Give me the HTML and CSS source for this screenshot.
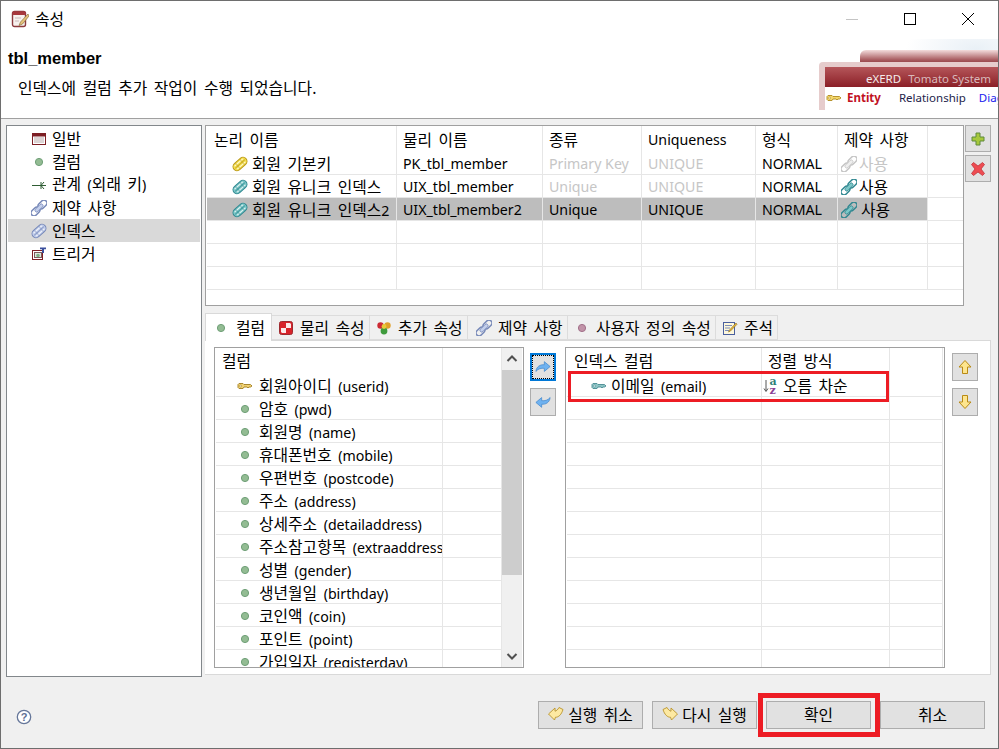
FILE: index.html
```html
<!DOCTYPE html>
<html lang="ko">
<head>
  <meta charset="UTF-8">
  <title>속성</title>
  <link rel="stylesheet" href="styles.css">
</head>
<body>
  <!-- icon sheet -->
  <svg class="sprites" width="0" height="0">
    <symbol id="i-pencil" viewBox="0 0 16 16">
      <g transform="rotate(-42 8 8)">
        <rect x="0" y="4" width="16" height="8" rx="4" fill="currentColor" stroke="var(--edge)"/>
        <path d="M2.5 6H13.5M2.5 10H13.5" stroke="#fff" stroke-opacity=".8" fill="none"/>
        <path d="M1.5 8H14.5" stroke="var(--edge)" stroke-opacity=".7" fill="none"/>
        <path d="M5 4.5V11.5M11 4.5V11.5" stroke="var(--edge)" stroke-opacity=".45" fill="none"/>
      </g>
    </symbol>
    <symbol id="i-link" viewBox="0 0 16 16">
      <g transform="rotate(-45 8 8)" fill="none">
        <rect x="-2" y="5" width="10" height="6" rx="3" stroke="var(--edge)" stroke-width="1.5"/>
        <rect x="8" y="5" width="10" height="6" rx="3" stroke="var(--edge)" stroke-width="1.5"/>
        <rect x="3" y="6.3" width="10" height="3.4" rx="1.7" fill="currentColor" stroke="var(--edge)" stroke-width=".8"/>
      </g>
    </symbol>
    <symbol id="i-dot" viewBox="0 0 16 16">
      <circle cx="8" cy="8" r="3.6" fill="#93bc93" stroke="#6f9f77"/>
    </symbol>
    <symbol id="i-dot-pink" viewBox="0 0 16 16">
      <circle cx="8" cy="8" r="3.6" fill="#c193a8" stroke="#a2708a"/>
    </symbol>
    <symbol id="i-key" viewBox="0 0 16 16">
      <path d="M2 5.5H6L7 6.5H13.5L15 8L13.5 9H12L11 10L10 9H7L6 10.5H2L1 9.5V6.5Z" fill="currentColor" stroke="var(--edge)" stroke-width=".9"/>
      <circle cx="3.6" cy="8" r="1" fill="#fff" stroke="var(--edge)" stroke-width=".6"/>
    </symbol>
    <symbol id="i-table" viewBox="0 0 16 16">
      <rect x="1.5" y="2.5" width="13" height="11" fill="#fff" stroke="#7d1f24"/>
      <rect x="1.5" y="2.5" width="13" height="2.5" fill="#7d1f24" stroke="#7d1f24"/>
      <path d="M3 7H13M3 9H13M3 11H13" stroke="#b9a9a9"/>
    </symbol>
    <symbol id="i-relation" viewBox="0 0 16 16">
      <path d="M1 8.5H15" stroke="#2f5d34" fill="none"/>
      <path d="M13 5L10 8.5L13 12M10 5V12" stroke="#2f5d34" fill="none"/>
    </symbol>
    <symbol id="i-trigger" viewBox="0 0 16 16">
      <rect x="1.5" y="4.5" width="10" height="9" fill="#fff" stroke="#7d1f24"/>
      <rect x="3.5" y="6.5" width="7" height="5" fill="#dfe8df" stroke="#7d5a5a"/>
      <circle cx="7" cy="9.5" r="1.8" fill="#7fae85"/>
      <path d="M9 1.5H15V3.2H13V7H11V3.2H9Z" fill="#3b4f9c"/>
    </symbol>
    <symbol id="i-check" viewBox="0 0 16 16">
      <rect x="1.5" y="1.5" width="13" height="13" rx="2" fill="#d8232a" stroke="#9d2b30"/>
      <path d="M3 8H8V13H4L3 12ZM8 3H12L13 4V8H8Z" fill="#fbeaea"/>
    </symbol>
    <symbol id="i-hearts" viewBox="0 0 16 16">
      <circle cx="4.5" cy="5.5" r="3.2" fill="#cc2a34"/>
      <circle cx="11.5" cy="5.5" r="3.2" fill="#e0a02a"/>
      <circle cx="8" cy="11" r="3.4" fill="#3f9b3c"/>
      <circle cx="8" cy="6.5" r="2.4" fill="#e7c93a"/>
    </symbol>
    <symbol id="i-note" viewBox="0 0 16 16">
      <rect x="1.5" y="2.5" width="11" height="12" fill="#fdf7dc" stroke="#4a5f9e"/>
      <path d="M3 5.5H10M3 8H8M3 10.5H7" stroke="#7d8db9"/>
      <path d="M14 3L7.5 10L6.5 12L8.5 11L15 4.3Z" fill="#e9b93a" stroke="#8a6a15" stroke-width=".6"/>
    </symbol>
    <symbol id="i-title" viewBox="0 0 18 18">
      <rect x="1.5" y="1.5" width="13" height="15" rx="2" fill="#f7f1ee" stroke="#8c3a3e" stroke-width="1.4"/>
      <rect x="1.5" y="1.5" width="13" height="3.5" rx="1" fill="#a8383d"/>
      <path d="M4 8H10M4 11H8" stroke="#c9b8b8"/>
      <path d="M17 4L9.5 12L8 15.5L11.5 14L18 6Z" fill="#e6c27a" stroke="#8b7340" stroke-width=".7"/>
    </symbol>
    <symbol id="i-plus" viewBox="0 0 16 16">
      <path d="M6 2H10V6H14V10H10V14H6V10H2V6H6Z" fill="#a6c83c" stroke="#5f8a3a"/>
    </symbol>
    <symbol id="i-cross" viewBox="0 0 16 16">
      <path d="M3.5 1.5L8 5L12.5 1.5L14.5 3.5L11 8L14.5 12.5L12.5 14.5L8 11L3.5 14.5L1.5 12.5L5 8L1.5 3.5Z" fill="#ee4c52" stroke="#c0333a" stroke-width=".8"/>
    </symbol>
    <symbol id="i-turn" viewBox="0 0 18 16">
      <path d="M1 13C1.5 7.5 6 5 10.5 5.5V2L17 7.5L10.5 13V9.5C7 9 3.5 10 1 13Z" fill="currentColor" stroke="var(--edge)" stroke-width=".8"/>
    </symbol>
    <symbol id="i-up" viewBox="0 0 16 16">
      <path d="M8 1.5L14 8H10.5V14.5H5.5V8H2Z" fill="#fde58e" stroke="#b98a14"/>
    </symbol>
    <symbol id="i-redo" viewBox="0 0 16 16">
      <path d="M1 3.5L5 1.5C6 3.5 7.5 4.8 9 5.2V2L15.5 8L9.5 14L8.5 11.2C5.5 11.5 2.5 8.5 1 3.5Z" fill="#fde9a2" stroke="#b9932a" stroke-width=".9"/>
    </symbol>
    <symbol id="i-chev" viewBox="0 0 16 16">
      <path d="M3.5 10L8 5.5L12.5 10" fill="none" stroke="#505050" stroke-width="2"/>
    </symbol>
  </svg>

  <div class="window">
    <div class="titlebar">
      <svg class="title-icon"><use href="#i-title"/></svg>
      <span class="title-text">속성</span>
      <div class="caption-buttons">
        <span class="caption"><svg width="12" height="12"><path d="M0 6.5H12" stroke="#c4c4c4"/></svg></span>
        <span class="caption"><svg width="12" height="12"><rect x=".5" y=".5" width="11" height="11" fill="none" stroke="#000"/></svg></span>
        <span class="caption"><svg width="12" height="12"><path d="M0 0L12 12M12 0L0 12" stroke="#000"/></svg></span>
      </div>
    </div>

    <div class="header">
      <h1>tbl_member</h1>
      <p>인덱스에 컬럼 추가 작업이 수행 되었습니다.</p>
      <div class="banner">
        <div class="banner-back"></div>
        <div class="banner-front">
          <div class="banner-title"><span>eXERD</span><span class="dim">Tomato System</span></div>
          <div class="banner-menu">
            <svg class="ic yellow-key"><use href="#i-key"/></svg>
            <b>Entity</b><span class="rel">Relationship</span><span class="diag">Diag</span>
          </div>
        </div>
      </div>
    </div>

    <div class="main">
      <ul class="nav">
        <li><svg class="ic"><use href="#i-table"/></svg><span>일반</span></li>
        <li><svg class="ic"><use href="#i-dot"/></svg><span>컬럼</span></li>
        <li><svg class="ic"><use href="#i-relation"/></svg><span>관계 <span class="en">(</span>외래 키<span class="en">)</span></span></li>
        <li><svg class="ic lavender"><use href="#i-link"/></svg><span>제약 사항</span></li>
        <li class="selected"><svg class="ic lavender"><use href="#i-pencil"/></svg><span>인덱스</span></li>
        <li><svg class="ic"><use href="#i-trigger"/></svg><span>트리거</span></li>
      </ul>

      <div class="content">
        <div class="top-row">
          <div class="grid-box index-box">
            <table class="grid grid-index">
              <colgroup>
                <col class="c190"><col class="c146"><col class="c99"><col class="c114"><col class="c82"><col class="c90"><col class="c36">
              </colgroup>
              <thead>
                <tr><th class="first">논리 이름</th><th>물리 이름</th><th>종류</th><th class="en">Uniqueness</th><th>형식</th><th>제약 사항</th><th></th></tr>
              </thead>
              <tbody>
                <tr>
                  <td><span class="cell"><svg class="ic yellow"><use href="#i-pencil"/></svg><span>회원 기본키</span></span></td>
                  <td class="en">PK_tbl_member</td><td class="en off">Primary Key</td><td class="en off">UNIQUE</td><td class="en">NORMAL</td>
                  <td class="off"><span class="flag"><svg class="ic grey"><use href="#i-link"/></svg>사용</span></td><td></td>
                </tr>
                <tr>
                  <td><span class="cell"><svg class="ic teal"><use href="#i-pencil"/></svg><span>회원 유니크 인덱스</span></span></td>
                  <td class="en">UIX_tbl_member</td><td class="en off">Unique</td><td class="en off">UNIQUE</td><td class="en">NORMAL</td>
                  <td><span class="flag"><svg class="ic teal"><use href="#i-link"/></svg>사용</span></td><td></td>
                </tr>
                <tr class="picked">
                  <td><span class="cell"><svg class="ic teal"><use href="#i-pencil"/></svg><span>회원 유니크 인덱스<span class="en">2</span></span></span></td>
                  <td class="en">UIX_tbl_member2</td><td class="en">Unique</td><td class="en">UNIQUE</td><td class="en">NORMAL</td>
                  <td><span class="flag wide"><svg class="ic teal"><use href="#i-link"/></svg>사용</span></td><td class="blank"></td>
                </tr>
                <tr><td></td><td></td><td></td><td></td><td></td><td></td><td></td></tr>
                <tr><td></td><td></td><td></td><td></td><td></td><td></td><td></td></tr>
                <tr><td></td><td></td><td></td><td></td><td></td><td></td><td></td></tr>
              </tbody>
            </table>
          </div>
          <div class="side-buttons">
            <button class="tool"><svg class="ic"><use href="#i-plus"/></svg></button>
            <button class="tool"><svg class="ic"><use href="#i-cross"/></svg></button>
          </div>
        </div>

        <div class="tabs">
          <div class="tab active"><svg class="ic"><use href="#i-dot"/></svg>컬럼</div>
          <div class="tab w98"><svg class="ic"><use href="#i-check"/></svg>물리 속성</div>
          <div class="tab w98"><svg class="ic"><use href="#i-hearts"/></svg>추가 속성</div>
          <div class="tab w100"><svg class="ic lavender"><use href="#i-link"/></svg>제약 사항</div>
          <div class="tab w148"><svg class="ic"><use href="#i-dot-pink"/></svg>사용자 정의 속성</div>
          <div class="tab w62"><svg class="ic"><use href="#i-note"/></svg>주석</div>
        </div>

        <div class="tab-panel">
          <div class="grid-box columns-box">
            <div class="clip">
              <table class="grid grid-columns">
                <colgroup><col class="c227"><col class="c59"></colgroup>
                <thead><tr><th>컬럼</th><th></th></tr></thead>
                <tbody>
                  <tr><td><span class="cell"><svg class="ic gold"><use href="#i-key"/></svg><span>회원아이디 <span class="en">(userid)</span></span></span></td><td></td></tr>
                  <tr><td><span class="cell"><svg class="ic"><use href="#i-dot"/></svg><span>암호 <span class="en">(pwd)</span></span></span></td><td></td></tr>
                  <tr><td><span class="cell"><svg class="ic"><use href="#i-dot"/></svg><span>회원명 <span class="en">(name)</span></span></span></td><td></td></tr>
                  <tr><td><span class="cell"><svg class="ic"><use href="#i-dot"/></svg><span>휴대폰번호 <span class="en">(mobile)</span></span></span></td><td></td></tr>
                  <tr><td><span class="cell"><svg class="ic"><use href="#i-dot"/></svg><span>우편번호 <span class="en">(postcode)</span></span></span></td><td></td></tr>
                  <tr><td><span class="cell"><svg class="ic"><use href="#i-dot"/></svg><span>주소 <span class="en">(address)</span></span></span></td><td></td></tr>
                  <tr><td><span class="cell"><svg class="ic"><use href="#i-dot"/></svg><span>상세주소 <span class="en">(detailaddress)</span></span></span></td><td></td></tr>
                  <tr><td><span class="cell"><svg class="ic"><use href="#i-dot"/></svg><span>주소참고항목 <span class="en">(extraaddress)</span></span></span></td><td></td></tr>
                  <tr><td><span class="cell"><svg class="ic"><use href="#i-dot"/></svg><span>성별 <span class="en">(gender)</span></span></span></td><td></td></tr>
                  <tr><td><span class="cell"><svg class="ic"><use href="#i-dot"/></svg><span>생년월일 <span class="en">(birthday)</span></span></span></td><td></td></tr>
                  <tr><td><span class="cell"><svg class="ic"><use href="#i-dot"/></svg><span>코인액 <span class="en">(coin)</span></span></span></td><td></td></tr>
                  <tr><td><span class="cell"><svg class="ic"><use href="#i-dot"/></svg><span>포인트 <span class="en">(point)</span></span></span></td><td></td></tr>
                  <tr><td><span class="cell"><svg class="ic"><use href="#i-dot"/></svg><span>가입일자 <span class="en">(registerday)</span></span></span></td><td></td></tr>
                </tbody>
              </table>
            </div>
            <div class="scrollbar">
              <span class="arrow"><svg class="ic"><use href="#i-chev"/></svg></span>
              <div class="track"><div class="thumb"></div></div>
              <span class="arrow down"><svg class="ic"><use href="#i-chev"/></svg></span>
            </div>
          </div>

          <div class="side-buttons move">
            <button class="tool focused"><svg class="ic blue"><use href="#i-turn"/></svg></button>
            <button class="tool"><svg class="ic blue turned"><use href="#i-turn"/></svg></button>
          </div>

          <div class="grid-box picked-box">
            <table class="grid grid-picked">
              <colgroup><col class="c195"><col class="c128"><col class="c53"></colgroup>
              <thead><tr><th class="first">인덱스 컬럼</th><th>정렬 방식</th><th></th></tr></thead>
              <tbody>
                <tr>
                  <td><span class="cell"><svg class="ic teal-key"><use href="#i-key"/></svg><span>이메일 <span class="en">(email)</span></span></span></td>
                  <td>
                    <span class="sort">
                      <svg class="ic" viewBox="0 0 16 16">
                        <path d="M3 2V13M1 10.5L3 13.5L5 10.5" fill="none" stroke="#555"/>
                        <text x="6.5" y="7" class="az a">a</text>
                        <text x="6.5" y="15.5" class="az z">z</text>
                      </svg><span>오름 차순</span>
                    </span>
                  </td>
                  <td></td>
                </tr>
                <tr><td></td><td></td><td></td></tr>
                <tr><td></td><td></td><td></td></tr>
                <tr><td></td><td></td><td></td></tr>
                <tr><td></td><td></td><td></td></tr>
                <tr><td></td><td></td><td></td></tr>
                <tr><td></td><td></td><td></td></tr>
                <tr><td></td><td></td><td></td></tr>
                <tr><td></td><td></td><td></td></tr>
                <tr><td></td><td></td><td></td></tr>
                <tr><td></td><td></td><td></td></tr>
                <tr><td></td><td></td><td></td></tr>
                <tr><td></td><td></td><td></td></tr>
              </tbody>
            </table>
          </div>

          <div class="side-buttons move">
            <button class="tool"><svg class="ic"><use href="#i-up"/></svg></button>
            <button class="tool"><svg class="ic flip-y"><use href="#i-up"/></svg></button>
          </div>
        </div>
      </div>
    </div>

    <div class="footer">
      <svg class="help" width="16" height="16" viewBox="0 0 16 16">
        <circle cx="8" cy="8" r="6.7" fill="#fff" stroke="#66779a" stroke-width="1.3"/>
        <text x="8" y="12" class="help-mark">?</text>
      </svg>
      <div class="footer-buttons">
        <button class="btn"><svg class="ic flip"><use href="#i-redo"/></svg><span>실행 취소</span></button>
        <button class="btn"><svg class="ic"><use href="#i-redo"/></svg><span>다시 실행</span></button>
        <button class="btn"><span>확인</span></button>
        <button class="btn"><span>취소</span></button>
      </div>
    </div>

    <!-- red annotation boxes drawn over the screenshot -->
    <div class="mark mark-row"></div>
    <div class="mark mark-ok"></div>
  </div>
</body>
</html>
```

FILE: styles.css
```css
* {
  box-sizing: border-box;
}
html, body {
  margin: 0;
  padding: 0;
}
body {
  font-family: "Noto Sans", "Noto Sans CJK KR", sans-serif;
  font-size: 15.8px;
  word-spacing: 2.4px;
  color: #000;
  overflow: hidden;
}
/* latin text runs smaller than the hangul next to it */
.en {
  font-size: 14.2px;
  word-spacing: 0;
}
.sprites {
  position: absolute;
}

.window {
  position: relative;
  width: 999px;
  height: 749px;
  border: 1px solid #6e6e6e;
  background: #f0f0f0;
  display: flex;
  flex-direction: column;
}

/* Title bar */
.titlebar {
  height: 38px;
  background: #fff;
  display: flex;
  align-items: center;
  padding: 0 0 2px 10px;
}
.title-icon {
  width: 18px;
  height: 18px;
}
.title-text {
  margin-left: 6px;
  line-height: 20px;
}
.caption-buttons {
  margin-left: auto;
  display: flex;
  padding-right: 1px;
}
.caption {
  width: 58px;
  height: 36px;
  display: flex;
  align-items: center;
  justify-content: center;
}

/* Header */
.header {
  position: relative;
  height: 80px;
  background: radial-gradient(70px 32px at 975px 10px, #e9f0f6, rgba(255, 255, 255, 0)), #fff;
  border-bottom: 1px solid #a0a0a0;
  overflow: hidden;
}
.header h1 {
  margin: 8px 0 0 7px;
  font-family: "Liberation Sans", sans-serif;
  font-size: 16.5px;
  line-height: 22px;
  font-weight: 600;
  word-spacing: 0;
}
.header p {
  margin: 8px 0 0 17px;
  line-height: 22px;
}

.banner {
  position: absolute;
  top: 11px;
  left: 818px;
  width: 180px;
  height: 60px;
  word-spacing: 0;
}
.banner-back {
  position: absolute;
  top: 0;
  left: 41px;
  right: 0;
  height: 14px;
  border-radius: 6px 0 0 0;
  background: linear-gradient(#f3dcdc, #a85c60 70%, #8d3a40);
}
.banner-front {
  position: absolute;
  top: 12px;
  left: 0;
  right: 0;
  height: 48px;
  border-radius: 4px 0 0 0;
  background: #e6cccc;
  padding: 5px 0 0 6px;
}
.banner-title {
  height: 20px;
  background: linear-gradient(#b5565a, #8b1f27);
  color: #f4ecec;
  font-size: 11.5px;
  line-height: 20px;
  padding: 2px 0 0 41px;
  display: flex;
  gap: 7px;
}
.banner-title .dim {
  color: #d9b9bb;
}
.banner-menu {
  height: 23px;
  background: #fff;
  display: flex;
  align-items: center;
  padding-bottom: 2px;
  font-size: 11.5px;
  white-space: nowrap;
  overflow: hidden;
}
.banner-menu .ic {
  margin-left: 1px;
}
.banner-menu b {
  color: #c1121f;
  margin-left: 5px;
}
.banner-menu .rel {
  margin-left: 18px;
  color: #23234a;
}
.banner-menu .diag {
  margin-left: 13px;
  color: #1a1aee;
}

/* Main area */
.main {
  display: flex;
  gap: 3px;
  padding: 6px 0 0 5px;
  height: 558px;
}
.nav {
  width: 196px;
  margin: 0;
  padding: 1px;
  list-style: none;
  background: #fff;
  border: 1px solid #82878b;
}
.nav li {
  height: 23px;
  display: flex;
  align-items: center;
  gap: 5px;
  padding-left: 23px;
  line-height: 20px;
}
.nav li.selected {
  background: #d9d9d9;
}
.content {
  width: 786px;
}
.top-row {
  display: flex;
  gap: 1px;
  height: 181px;
}

.ic {
  width: 16px;
  height: 16px;
  flex: none;
}
.lavender { color: #c3cfec; --edge: #7688b8; }
.yellow { color: #f6e04c; --edge: #b9981a; }
.teal { color: #7cc8c8; --edge: #2f8790; }
.grey { color: #eeeeee; --edge: #c4c4c4; }
.blue { color: #6fb2f0; --edge: #3f86cc; }
.gold { color: #f0d070; --edge: #a07d20; }
.yellow-key { color: #f3d76b; --edge: #b08a20; }
.teal-key { color: #8cc4c4; --edge: #4a8a92; }
.flip { transform: scaleX(-1); }
.flip-y { transform: scaleY(-1); }
.turned { transform: rotate(180deg); }

/* Grids */
.grid-box {
  background: #fff;
  border: 1px solid #a0a0a0;
}
.index-box {
  width: 760px;
  padding-left: 1px;
  overflow: hidden;
}
.grid {
  table-layout: fixed;
  border-collapse: separate;
  border-spacing: 0;
}
.grid-index { width: 757px; }
.grid-columns { width: 286px; }
.grid-picked { width: 376px; }
.grid th, .grid td {
  padding: 0 0 0 6px;
  font-weight: 400;
  text-align: left;
  white-space: nowrap;
  overflow: hidden;
  line-height: 20px;
  border-right: 1px solid #e6e6e6;
}
.grid th {
  height: 26px;
}
.grid th.first {
  padding-left: 7px;
}
.index-box th {
  padding-top: 2px;
}
.grid td {
  height: 23px;
  padding-top: 2px;
  border-bottom: 1px solid #e6e6e6;
}
.grid td.off {
  color: #c6c6c6;
}
.grid tr.picked td {
  background: #bdbdbd;
}
.grid tr.picked td.blank {
  background: #fff;
}
.c190 { width: 190px; }
.c146 { width: 146px; }
.c99 { width: 99px; }
.c114 { width: 114px; }
.c82 { width: 82px; }
.c90 { width: 90px; }
.c36 { width: 36px; }
.c227 { width: 227px; }
.c59 { width: 59px; }
.c195 { width: 195px; }
.c128 { width: 128px; }
.c53 { width: 53px; }

/* fixed height, the mixed font sizes would otherwise push the row to 24px */
.cell, .flag, .sort {
  height: 20px;
  display: flex;
  align-items: center;
}
.cell {
  gap: 4px;
  padding-left: 19px;
}
.columns-box .cell {
  padding-left: 15px;
  gap: 6px;
}
.picked-box .cell {
  padding-left: 18px;
}
.flag {
  gap: 2px;
  margin-left: -3px;
}
.flag.wide {
  gap: 4px;
}
.sort {
  margin-left: -5px;
  gap: 4px;
}
.az {
  font-family: "DejaVu Serif", serif;
  font-size: 11px;
  font-weight: 700;
  word-spacing: 0;
}
.az.a { fill: #2f7f78; }
.az.z { fill: #8c3f96; }

/* Small tool buttons */
.side-buttons {
  display: flex;
  flex-direction: column;
  gap: 3px;
  width: 26px;
}
.tool {
  width: 26px;
  height: 27px;
  padding: 0;
  background: #e1e1e1;
  border: 1px solid #adadad;
  display: flex;
  align-items: center;
  justify-content: center;
}
.tool.focused {
  border: 2px solid #0078d7;
  outline: 1px dotted #000;
  outline-offset: -3px;
}
.side-buttons.move {
  padding-top: 6px;
  gap: 7px;
}
.side-buttons.move .tool {
  height: 28px;
}

/* Tabs */
.tabs {
  display: flex;
  align-items: flex-end;
  height: 27px;
  margin-top: 7px;
  position: relative;
  z-index: 1;
}
.tab {
  height: 25px;
  display: flex;
  align-items: center;
  gap: 6px;
  padding-left: 6px;
  background: #f0f0f0;
  border: 1px solid #dcdcdc;
  border-left: 0;
  white-space: nowrap;
}
.tab.active {
  width: 67px;
  height: 28px;
  margin-bottom: -1px;
  background: #fff;
  border: 1px solid #d9d9d9;
  border-bottom: 0;
  padding-left: 7px;
  gap: 7px;
}
.w98 { width: 98px; }
.w100 { width: 100px; padding-left: 8px; }
.w148 { width: 148px; }
.w62 { width: 62px; }

.tab-panel {
  display: flex;
  height: 335px;
  padding: 7px 0 7px 9px;
  background: #fff;
  border: 1px solid #d9d9d9;
  border-left: 0;
  border-top: 0;
  box-shadow: inset 0 1px 0 #d9d9d9;
}
.columns-box {
  width: 310px;
  display: flex;
  height: 321px;
}
.clip {
  width: 288px;
  padding-left: 1px;
  overflow: hidden;
}
.scrollbar {
  width: 20px;
  margin-left: -1px;
  background: #f0f0f0;
  display: flex;
  flex-direction: column;
}
.arrow {
  height: 22px;
  display: flex;
  align-items: center;
  justify-content: center;
}
.arrow.down .ic {
  transform: scaleY(-1);
}
.track {
  flex: 1;
}
.thumb {
  height: 205px;
  background: #cdcdcd;
}
.side-buttons.move:nth-child(2) {
  margin: 0 9px 0 6px;
}
.picked-box {
  width: 380px;
  height: 321px;
  margin-right: 7px;
  padding-left: 1px;
  overflow: hidden;
}

/* Footer */
.footer {
  display: flex;
  align-items: center;
  justify-content: space-between;
  padding: 24px 13px 0 15px;
}
.help {
  margin-top: 3px;
}
.help-mark {
  font-family: "Liberation Sans", sans-serif;
  font-size: 11px;
  font-weight: 700;
  fill: #5d6f93;
  text-anchor: middle;
}
.footer-buttons {
  display: flex;
  gap: 9px;
}
.btn {
  width: 105px;
  height: 28px;
  padding: 0 0 2px;
  font: inherit;
  word-spacing: 2.4px;
  color: #000;
  background: #e1e1e1;
  border: 1px solid #adadad;
  display: flex;
  align-items: center;
  justify-content: center;
  gap: 4px;
}

/* Red annotations */
.mark {
  position: absolute;
  border-style: solid;
  border-color: #ed1c24;
  pointer-events: none;
}
.mark-row {
  left: 567px;
  top: 370px;
  width: 321px;
  height: 31px;
  border-width: 3px;
}
.mark-ok {
  left: 757px;
  top: 692px;
  width: 122px;
  height: 44px;
  border-width: 5px;
}
```
